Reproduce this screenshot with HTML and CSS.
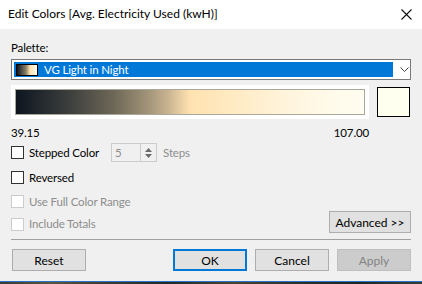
FILE: index.html
```html
<!DOCTYPE html>
<html lang="en">
<head>
	<meta charset="UTF-8">
	<title>Edit Colors</title>
	<link rel="stylesheet" href="styles.css">
</head>
<body>
	<div class="titlebar">
		<span class="title">Edit Colors [Avg. Electricity Used (kwH)]</span>
		<svg class="close" width="11" height="11" viewBox="0 0 11 11"><path d="M0.5 0.5L10.5 10.5M10.5 0.5L0.5 10.5" stroke="#111" stroke-width="1.1" fill="none"/></svg>
	</div>
	<div class="dialog">
		<div class="label">Palette:</div>
		<div class="combo">
			<div class="combo-sel">
				<span class="mini-ramp"></span>
				<span>VG Light in Night</span>
			</div>
			<svg class="chev" width="9" height="5" viewBox="0 0 9 5"><path d="M0.5 0.5L4.5 4.5L8.5 0.5" stroke="#444" fill="none"/></svg>
		</div>
		<div class="ramp-row">
			<div class="ramp-box"><div class="ramp"></div></div>
			<div class="swatch"></div>
		</div>
		<div class="range">
			<span>39.15</span>
			<span>107.00</span>
		</div>
		<div class="row stepped">
			<span class="check"></span>
			<span class="text">Stepped Color</span>
			<div class="spin">
				<span>5</span>
				<div class="spin-btns">
					<svg width="7" height="4" viewBox="0 0 7 4"><path d="M0 4L3.5 0L7 4Z" fill="#6a6a6a"/></svg>
					<svg width="7" height="4" viewBox="0 0 7 4"><path d="M0 0L3.5 4L7 0Z" fill="#6a6a6a"/></svg>
				</div>
			</div>
			<span class="text off steps">Steps</span>
		</div>
		<div class="row reversed">
			<span class="check"></span>
			<span class="text">Reversed</span>
		</div>
		<div class="row full">
			<span class="check off"></span>
			<span class="text off">Use Full Color Range</span>
		</div>
		<div class="row totals">
			<span class="check off"></span>
			<span class="text off">Include Totals</span>
			<button class="btn advanced">Advanced &gt;&gt;</button>
		</div>
		<div class="sep"></div>
		<div class="buttons">
			<button class="btn">Reset</button>
			<span class="grow"></span>
			<button class="btn ok">OK</button>
			<button class="btn">Cancel</button>
			<button class="btn disabled">Apply</button>
		</div>
	</div>
	<div class="taskbar"></div>
</body>
</html>
```
FILE: styles.css
```css
*{margin:0; padding:0; box-sizing:border-box;}
html,body{width:422px; height:284px; overflow:hidden;}
body{font-family:Lato,"Noto Sans","Liberation Sans",sans-serif; font-size:11.5px; letter-spacing:-0.15px; color:#000; background:#f0f0f0;}

.titlebar{height:29px; background:#fff; display:flex; align-items:center; justify-content:space-between; padding:0 10px 2px 8px;}
.title{font-size:12px; letter-spacing:0;}
.close{margin-top:1px;}

.dialog{height:252px; padding:0 11px; background:#f0f0f0;}
.label{padding-top:11px; line-height:15px; height:30px;}

.combo{height:21px; border:1px solid #7a7a7a; background:#fff; display:flex; align-items:center; padding:0 0 0 2px;}
.combo-sel{width:379px; height:15px; background:#0078d7; color:#fff; display:flex; align-items:center; gap:6px; padding-left:2px; line-height:15px;}
.mini-ramp{width:22px; height:12px; border:1px solid #000; background:linear-gradient(to right,#0d1520,#8a8068 45%,#ffe2b0 65%,#fffdf0);}
.chev{margin-left:7px;}

.ramp-row{display:flex; align-items:flex-start; margin-top:5px; height:34px;}
.ramp-box{width:358px; height:34px; background:#fff; padding:4px;}
.ramp{height:26px; border:1px solid #a9a799; background:linear-gradient(to right,#0d1520 0%,#3b3e3c 15%,#6d6757 28%,#a29479 38%,#cbb592 44%,#ffe2b0 50%,#ffeac2 62%,#fff4dc 78%,#fffbec 92%,#fffdf0 100%);}
.swatch{width:33px; height:30px; margin:2px 0 0 8px; border:1px solid #000; background:#fffff0;}

.range{width:358px; display:flex; justify-content:space-between; margin-top:6px; line-height:15px; height:15px;}

.row{display:flex; align-items:center; height:19px;}
.check{width:13px; height:13px; border:1px solid #333; background:#fff; flex:none;}
.check.off{border-color:#cccccc;}
.text{margin-left:5px;}
.text.off{color:#8d8d8d;}

.stepped{margin-top:3px;}
.spin{width:46px; height:19px; margin-left:12px; border:1px solid #cccccc; display:flex; align-items:center; justify-content:space-between; padding-left:3px; color:#8d8d8d;}
.spin-btns{width:16px; height:17px; border-left:1px solid #cccccc; display:flex; flex-direction:column; align-items:center; justify-content:center; gap:2px;}
.steps{margin-left:6px;}

.reversed{margin-top:6px;}
.full{margin-top:5px;}
.totals{height:22px; align-items:flex-start;}
.totals .check{margin-top:7px;}
.totals .text{margin-top:6px;}

.btn{height:22px; border:1px solid #adadad; background:#e1e1e1; font:inherit; font-size:12px; letter-spacing:0; color:#000;}
.advanced{width:82px; margin-left:auto;}

.sep{height:1px; background:#a0a0a0; margin-top:6px;}
.buttons{display:flex; margin-top:9px; gap:8px;}
.buttons .btn{width:74px;}
.buttons .btn:first-child{margin-left:1px;}
.grow{flex:1;}
.ok{border:2px solid #0078d7;}
.disabled{background:#cccccc; border-color:#bfbfbf; color:#838383;}

.taskbar{height:3px; border-top:1px solid #2a74c5; background:linear-gradient(to right,#3b3a35,#5a5445 12%,#3d3a33 25%,#23282a 40%,#4a4335 55%,#2d2f2c 70%,#1f2526 85%,#3a3c38);}
```
